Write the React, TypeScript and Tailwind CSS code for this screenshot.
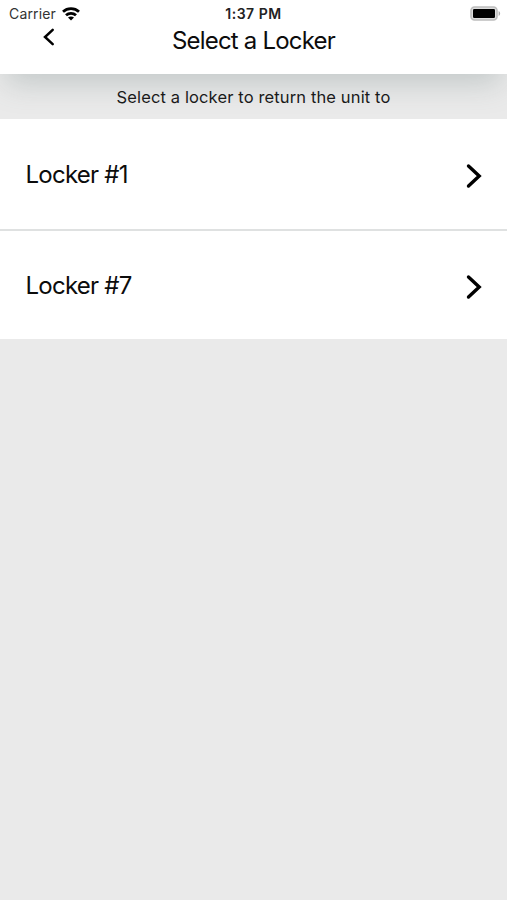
const lockers = [{ id: 1, name: "Locker #1" }, { id: 2, name: "Locker #7" }];

function Wifi() {
  return (
    <svg className="h-[14px] w-[18px]" viewBox="0 0 18 14" fill="none" stroke="#000" strokeWidth="2.8">
      <path d="M1 4.7C5.5 .6 12.5 .6 17 4.7" />
      <path d="M4 8.3C6.8 5.7 11.2 5.7 14 8.3" />
      <path d="M9 13.4L6 10.5C7.8 9.1 10.2 9.1 12 10.5Z" fill="#000" stroke="none" />
    </svg>
  )
}

function Battery() {
  return (
    <svg className="h-[15px] w-[31px]" viewBox="0 0 31 15">
      <rect x="1" y="1" width="26" height="13" rx="3.5" fill="#ddd" stroke="#bdbdbd" strokeWidth="1.6" />
      <rect x="3" y="3" width="22" height="9" rx="1.2" fill="#000" />
      <path d="M28.6 5C30.6 5.8 30.6 9.2 28.6 10Z" fill="#ababab" />
    </svg>
  )
}

function App() {
  return (
    <div className="h-screen w-full bg-[#eaeaea] font-['Inter','Liberation_Sans',sans-serif] text-[#0c0c0c] overflow-hidden">
      <header className="relative h-[74px] bg-white shadow-[0_15px_30px_-6px_rgba(90,110,110,0.28)]">
        <div className="grid h-[27px] grid-cols-[1fr_auto_1fr] items-center px-[6px]">
          <div className="flex items-center gap-[6px] pl-[3px]">
            <span className="text-[14px] tracking-[0.15px] text-[#333]">Carrier</span>
            <Wifi />
          </div>
          <span className="text-center text-[14px] font-semibold tracking-[0.5px] text-[#222]">1:37 PM</span>
          <div className="flex justify-end"><Battery /></div>
        </div>
        <div className="grid h-[28px] grid-cols-[90px_1fr_90px] items-center">
          <button className="ml-[42px] -mt-[8px] w-[13px]">
            <svg className="h-[18px] w-[13px]" viewBox="0 0 13 18" fill="none" stroke="#000" strokeWidth="2.5" strokeLinecap="round">
              <path d="M10.7 1.8L3 9L10.7 16.2" />
            </svg>
          </button>
          <h1 className="text-center text-[24px] leading-[28px] tracking-[-0.8px]">Select a Locker</h1>
        </div>
      </header>
      <p className="relative h-[45px] text-center text-[16.5px] leading-[46px] tracking-[0.13px] text-[#1a1a1a]">Select a locker to return the unit to</p>
      <ul className="bg-white">
        {lockers.map((l) => (
          <li key={l.id} className="flex h-[112px] items-center justify-between border-b-2 border-[#dfe1e1] pl-[25.5px] pr-[25.5px] pt-[2px] last:h-[108px] last:border-b-0">
            <span className="text-[24px] tracking-[-0.75px]">{l.name}</span>
            <svg className="mt-[1px] h-[26px] w-[16px]" viewBox="0 0 16 26" fill="none" stroke="#000" strokeWidth="3.4" strokeLinecap="round">
              <path d="M2.5 3L13.2 13L2.5 23" />
            </svg>
          </li>
        ))}
      </ul>
    </div>
  )
}

export default App
